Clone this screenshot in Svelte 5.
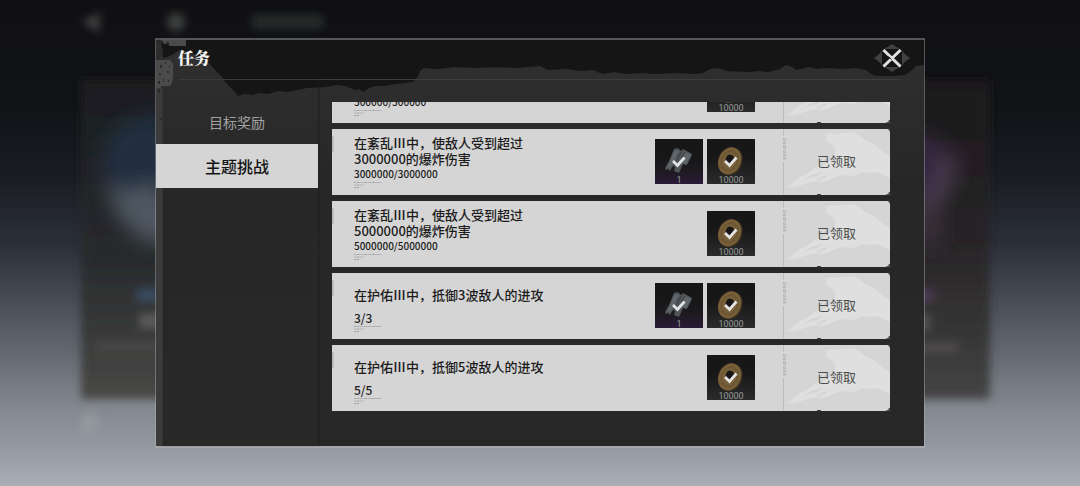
<script>
  import { onMount } from 'svelte';

  const tabs = ['目标奖励', '主题挑战'];
  let active = $state(1);
  let list;

  const tasks = [
    { lines: ['在紊乱Ⅲ中，使敌人受到超过', '500000的爆炸伤害'], count: '500000/500000', rewards: ['coin'] },
    { lines: ['在紊乱Ⅲ中，使敌人受到超过', '3000000的爆炸伤害'], count: '3000000/3000000', rewards: ['tag', 'coin'] },
    { lines: ['在紊乱Ⅲ中，使敌人受到超过', '5000000的爆炸伤害'], count: '5000000/5000000', rewards: ['coin'] },
    { lines: ['在护佑Ⅲ中，抵御3波敌人的进攻'], count: '3/3', rewards: ['tag', 'coin'] },
    { lines: ['在护佑Ⅲ中，抵御5波敌人的进攻'], count: '5/5', rewards: ['coin'] }
  ];

  onMount(() => {
    list.scrollTop = list.scrollHeight;
  });
</script>

<div class="stage">
  <svg class="scene" viewBox="0 0 1080 486" preserveAspectRatio="none" aria-hidden="true">
    <defs>
      <filter id="soft" x="-30%" y="-30%" width="160%" height="160%"><feGaussianBlur stdDeviation="4" /></filter>
      <filter id="haze" x="-60%" y="-60%" width="220%" height="220%"><feGaussianBlur stdDeviation="10" /></filter>
      <linearGradient id="poster" x1="0" y1="0" x2="0" y2="1">
        <stop offset="0" stop-color="#1a1d1f" />
        <stop offset="0.55" stop-color="#272a2c" />
        <stop offset="0.8" stop-color="#393a3a" />
        <stop offset="1" stop-color="#494846" />
      </linearGradient>
      <linearGradient id="posterWarm" x1="0" y1="0" x2="0" y2="1">
        <stop offset="0" stop-color="#1b191b" />
        <stop offset="0.5" stop-color="#272427" />
        <stop offset="0.8" stop-color="#373637" />
        <stop offset="1" stop-color="#454545" />
      </linearGradient>
    </defs>
    <g filter="url(#soft)">
      <rect x="81" y="80" width="200" height="319" fill="url(#poster)" />
      <rect x="800" y="80" width="190" height="319" fill="url(#posterWarm)" />
      <path d="M82 22 L102 12 L98 22 L101 33 Z" fill="#444647" />
      <circle cx="176" cy="22" r="9" fill="#414243" />
      <rect x="252" y="15" width="71" height="14" fill="#28292b" />
      <path d="M82 415 h17 l-5 18 h-12z" fill="#959a9e" />
      <rect x="137" y="289" width="40" height="12" fill="#384b60" />
      <rect x="140" y="314" width="40" height="14" fill="#5a5a5a" />
      <rect x="95" y="342" width="90" height="8" fill="#484a49" />
      <rect x="900" y="290" width="33" height="12" fill="#4c3a53" />
      <rect x="900" y="314" width="30" height="16" fill="#505051" />
      <rect x="900" y="343" width="58" height="9" fill="#504b4c" />
    </g>
    <g filter="url(#haze)">
      <path d="M103 145 L125 122 L160 112 L180 170 L175 240 L130 225 L105 190 Z" fill="#212d40" />
      <path d="M108 182 L128 194 L150 182 L175 210 V245 L142 240 L116 215 Z" fill="#4f5862" />
      <ellipse cx="922" cy="174" rx="28" ry="40" fill="#34263f" />
      <path d="M918 208 Q948 195 950 155" fill="none" stroke="#4d4152" stroke-width="14" />
      <rect x="915" y="205" width="25" height="40" fill="#3a323b" />
    </g>
  </svg>

  <section class="dialog" aria-labelledby="heading">
    <svg class="torn" viewBox="0 0 768 60" preserveAspectRatio="none" aria-hidden="true">
      <path class="ink" d="M5 0 L7 18 L14 16 L24 10 L38 14 L52 22 L60 31 L66 37 L70 43 L76 49 L82 56 L88 54 L96 55 L104 53 L112 54 L122 51 L132 52 L151 48 L170 47 L180 45 L190 46 L199 50 L203 49 L207 52 L213 48 L218 46 L228 46 L240 44 L257 42 L262 36 L264 31 L268 28 L282 29 L300 27 L320 28 L340 27 L362 28 L384 26 L392 30 L410 29 L425 31 L438 30 L446 34 L458 32 L470 34 L485 33 L500 34 L520 33 L540 34 L547 33 L554 29 L562 28 L570 31 L593 32 L602 31 L612 32 L624 29 L630 25 L636 27 L640 30 L653 27 L661 29 L670 28 L685 29 L700 28 L710 30 L715 34 L720 36 L735 36 L749 35 L755 31 L760 26 L768 25 V0 Z" />
    </svg>
    <svg class="grit" viewBox="0 0 32 406" preserveAspectRatio="xMinYMin slice" aria-hidden="true">
      <path fill="#3b3b3b" d="M0 48h7v358H0z" />
      <path fill="#333" d="M6 48h1v358H6z" />
      <path fill="#4b4b4b" d="M5 0h25v6H14l-2-2H8zM0 20h14l3 4v16l-3 6H6l-2 2H0z" />
      <path fill="#2b2b2b" d="M1 0h3v5H1zM2 9h5v7H2zM0 14h3v4H0zM4 25h2v3H4zM9 22h1v2H9zM3 33h2v2H3zM11 31h2v2h-2zM7 39h1v3H7zM13 26h1v2h-1zM2 41h2v3H2zM12 40h1v2h-1zM2 49h2v4H2zM4 78h2v2H4zM10 2h3v2h-3z" />
    </svg>

    <header>
      <h1 id="heading">任务</h1>
      <button class="close" aria-label="关闭">
        <svg viewBox="0 0 36 28" aria-hidden="true">
          <path fill="#414141" d="M18 0l7 5H11zM18 28l7-5H11zM0 14l8-6v12zM36 14l-8-6v12z" />
          <ellipse cx="18" cy="14" rx="13" ry="11" fill="none" stroke="#414141" />
          <path d="M9.500 6 L26.500 22.500 M26.500 6 L9.500 22.500" stroke="#e2e2e2" stroke-width="3" />
          <path d="M14.500 12.500l3 3" stroke="#141414" stroke-width="1" />
        </svg>
      </button>
    </header>

    <div class="body">
      <nav>
        {#each tabs as tab, i}
          <button class="tab" class:active={active === i} onclick={() => (active = i)}>{tab}</button>
        {/each}
      </nav>

      <ul class="list" bind:this={list}>
        {#each tasks as task}
          <li class="card">
            <div class="info">
              <p class="name">{#each task.lines as line}<span>{line}</span>{/each}</p>
              <p class="count" class:large={task.lines.length === 1}>{task.count}</p>
              <svg class="micro" viewBox="0 0 28 7" aria-hidden="true">
                <path d="M0 1.500h27M0 4h10M0 6.500h5" stroke="#a8a8a8" stroke-dasharray="2 0.6 3 0.5 1 0.6" />
              </svg>
            </div>
            <div class="rewards">
              {#each task.rewards as reward}
                <div class="reward" class:rare={reward === 'tag'}>
                  <svg viewBox="0 0 48 36" aria-hidden="true">
                    {#if reward === 'tag'}
                      <path fill="#50555a" d="M19 10L23 9L26 12L28 10L37 15L36 18L32 26L28 25L24 34L19 32L20 28L18 27L15 32L13 30L11 31L10 29L14 22Z" />
                      <path fill="#61666b" d="M20 11l4 1-8 16-4 1zM30 13l6 3-5 9-4-1z" />
                      <path fill="none" stroke="#3b3f43" d="M26 13l-7 14M30 13l-6 13" />
                    {:else}
                      <g transform="rotate(24 23 22)">
                        <ellipse cx="24" cy="22" rx="11" ry="14" fill="#4a3a24" />
                        <ellipse cx="22.500" cy="22" rx="11" ry="14" fill="#765e37" />
                        <ellipse cx="22.500" cy="22" rx="8" ry="10" fill="none" stroke="#5e4b2e" stroke-dasharray="3 1" />
                        <ellipse cx="22" cy="20" rx="4" ry="4" fill="#171717" />
                      </g>
                    {/if}
                    <path d="M18 22l4.500 4.500 7-8" fill="none" stroke="#e4e4e4" stroke-width="2.800" />
                  </svg>
                  <span>{reward === 'tag' ? '1' : '10000'}</span>
                </div>
              {/each}
            </div>
            <div class="stub">
              <svg class="peaks" viewBox="0 0 107 66" preserveAspectRatio="none" aria-hidden="true">
                <path fill="#dfdfdf" d="M42 6L47 4L54 5L60 4L69 3L77 7L84 12L92 16L100 23L107 27V49L101 46L95 43L88 44L81 43L70 47L60 46L53 48L44 52L35 54L42 49L33 52L25 54L15 57L3 59L10 54L17 48L25 44L33 38L40 37L48 31L53 22L50 17L43 11L45 9Z" />
                <path fill="#d2d2d2" d="M20 50L40 42L34 47ZM31 50L48 45L40 49Z" />
                <path fill="#444" d="M34 66v-1h4v1zM102 66l3-1 1-2h1v3zM105 0h2v3z" />
                <path stroke="#bdbdbd" d="M.5 0v7M.5 33v33" />
                <path stroke="#bababa" stroke-width="3" stroke-dasharray="3 1 2 1 4 1" d="M1.500 9v22" />
                <path stroke="#cacaca" stroke-dasharray="2 1 1 2" d="M1.500 9v22" />
              </svg>
              <span class="status">已领取</span>
            </div>
          </li>
        {/each}
      </ul>
    </div>
  </section>
</div>

<style>
  :global(body) {
    background: #111214;
  }

  .stage {
    position: relative;
    box-sizing: border-box;
    height: 100vh;
    min-height: 320px;
    padding: 38px 14.35%;
    display: flex;
    overflow: hidden;
    font-family: 'Noto Sans CJK SC', sans-serif;
    background: linear-gradient(#101012 0%, #111317 22%, #191c22 36%, #2b2f39 50%, #454a55 61%, #62676f 72%, #80868d 83%, #949aa2 92%, #a8adb6 100%);
  }

  .scene {
    position: absolute;
    inset: 0;
    width: 100%;
    height: 100%;
  }

  .dialog {
    position: relative;
    flex: 1;
    min-width: 0;
    display: flex;
    flex-direction: column;
    border: solid rgba(190, 190, 190, 0.4);
    border-width: 2px 1px;
    background: linear-gradient(#303030, #272727 35%, #282828) padding-box;
  }

  .torn {
    position: absolute;
    top: 0;
    left: 0;
    width: 100%;
    height: 60px;
  }

  .ink {
    fill: #151515;
  }

  .grit {
    position: absolute;
    top: 0;
    left: 0;
    width: 32px;
    height: 100%;
  }

  header {
    position: relative;
    height: 40px;
    display: flex;
    align-items: center;
    justify-content: space-between;
    padding: 0 14px 0 22px;
    box-sizing: border-box;
  }

  header::after {
    content: '';
    position: absolute;
    left: 22px;
    right: 24px;
    bottom: 0;
    height: 1px;
    background: #3d3d3d;
  }

  h1 {
    margin: 0;
    padding-bottom: 4px;
    font: 900 16px/20px 'Noto Serif CJK SC', 'Noto Serif SC', 'Noto Sans CJK SC', serif;
    color: #f4f4f4;
  }

  button {
    padding: 0;
    border: 0;
    background: none;
    font-family: inherit;
    cursor: pointer;
  }

  .close {
    width: 36px;
    height: 28px;
    margin-bottom: 4px;
  }

  .close svg {
    display: block;
  }

  .body {
    position: relative;
    flex: 1;
    min-height: 0;
    display: flex;
  }

  nav {
    flex: 0 0 162px;
    padding-top: 20px;
    display: flex;
    flex-direction: column;
    box-shadow: 2px 0 2px -1px #1e1e1e;
  }

  .tab {
    height: 44px;
    font-size: 14px;
    color: #a2a2a2;
  }

  .tab.active {
    font-size: 16px;
    font-weight: 500;
    color: #141414;
    background: #d5d5d5;
  }

  .list {
    flex: 1;
    min-width: 0;
    margin: 22px 34px 35px 14px;
    padding: 0;
    list-style: none;
    display: flex;
    flex-direction: column;
    gap: 6px;
    overflow-y: auto;
    scrollbar-width: none;
  }

  .card {
    flex: 0 0 66px;
    display: flex;
    background: #d5d5d5;
    border-radius: 0 2px 2px 0;
    color: #1c1c1c;
    overflow: hidden;
  }

  .card::before {
    content: '';
    width: 2px;
    height: 16px;
    margin-top: 7px;
    background: #bcbcbc;
  }

  .info {
    flex: 1;
    min-width: 0;
    padding: 6px 0 0 20px;
  }

  p {
    margin: 0;
  }

  .name {
    height: 32px;
    display: flex;
    flex-direction: column;
    justify-content: center;
    font-size: 13px;
    font-weight: 500;
    line-height: 16px;
    white-space: nowrap;
  }

  .count {
    font-size: 10px;
    font-weight: 500;
    line-height: 14px;
  }

  .count.large {
    font-size: 12px;
  }

  .micro {
    display: block;
    width: 28px;
    height: 7px;
  }

  .rewards {
    display: flex;
    gap: 4px;
    padding-top: 10px;
    margin-right: 28px;
  }

  .reward {
    width: 48px;
    height: 45px;
    display: flex;
    flex-direction: column;
    align-items: center;
    background: linear-gradient(#171717 40%, #2b2b2b);
    overflow: hidden;
  }

  .reward.rare {
    background: linear-gradient(#171717 40%, #1f1a23 75%, #2a1b38);
  }

  .reward svg {
    display: block;
    width: 48px;
    height: 36px;
    flex: none;
  }

  .reward span {
    font: 9px/11px Roboto, sans-serif;
    color: #9a9a9a;
  }

  .stub {
    position: relative;
    flex: 0 0 107px;
    display: flex;
    align-items: center;
    justify-content: center;
  }

  .peaks {
    position: absolute;
    inset: 0;
    width: 100%;
    height: 100%;
  }

  .status {
    position: relative;
    padding-bottom: 3px;
    font-size: 13px;
    color: #4c4c4c;
  }
</style>
